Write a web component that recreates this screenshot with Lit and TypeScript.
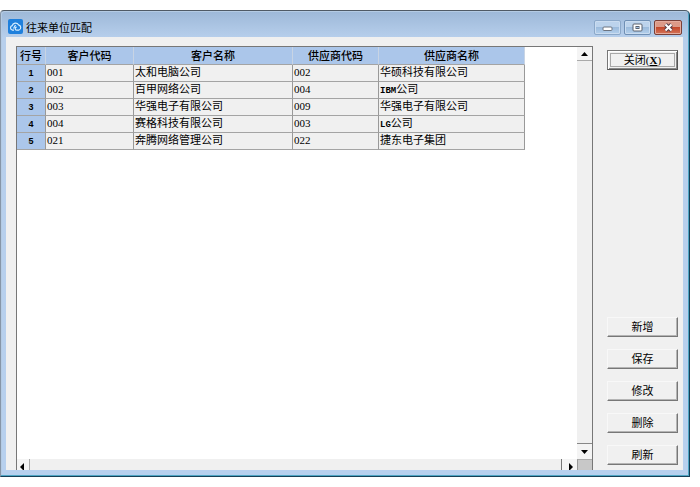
import { LitElement, html, css, svg } from "lit";
import { customElement, state } from "lit/decorators.js";

interface Match {
  code: string;
  customer: string;
  supplierCode: string;
  latin?: string;
  supplier: string;
}

const MATCHES: Match[] = [
  { code: "001", customer: "太和电脑公司", supplierCode: "002", supplier: "华硕科技有限公司" },
  { code: "002", customer: "百甲网络公司", supplierCode: "004", latin: "IBM", supplier: "公司" },
  { code: "003", customer: "华强电子有限公司", supplierCode: "009", supplier: "华强电子有限公司" },
  { code: "004", customer: "赛格科技有限公司", supplierCode: "003", latin: "LG", supplier: "公司" },
  { code: "021", customer: "奔腾网络管理公司", supplierCode: "022", supplier: "捷东电子集团" },
];

const arrow = (points: string) => html`
  <svg width="8" height="8" viewBox="0 0 8 8" aria-hidden="true">${svg`<polygon points=${points} fill="#000"/>`}</svg>
`;

@customElement("match-grid")
export class MatchGrid extends LitElement {
  static styles = css`
    :host {
      display: grid;
      grid-template-columns: minmax(0, 1fr) 15px;
      grid-template-rows: minmax(0, 1fr) 11px;
      background: #fff;
      border: 1px solid #777;
      border-bottom: 0;
    }
    .view { overflow: hidden; }
    table {
      border-collapse: separate;
      border-spacing: 0;
      table-layout: fixed;
      width: 508px;
    }
    .c-no { width: 29px; }
    .c-code { width: 88px; }
    .c-name { width: 159px; }
    .c-scode { width: 86px; }
    .c-sname { width: 146px; }
    th, td {
      box-sizing: border-box;
      height: 17px;
      padding: 0 0 0 1px;
      border-right: 1px solid #999;
      border-bottom: 1px solid #a4a4a4;
      font-size: 11px;
      line-height: 12px;
      white-space: nowrap;
      vertical-align: top;
    }
    td { background: #f0f0f0; text-align: left; }
    th {
      background: #abc6ea;
      text-align: center;
      font-weight: 500;
      padding: 0;
    }
    thead th { height: 18px; line-height: 16px; border-right-color: #c8d4e4; }
    tbody th { font: bold 9px/16px "Liberation Sans", sans-serif; }
    td.code { font-family: "Liberation Serif", serif; line-height: 14px; }
    .latin { font: bold 9px/9px "Liberation Mono", monospace; }
    button {
      display: flex;
      align-items: center;
      justify-content: center;
      flex: none;
      padding: 0;
      border: 0;
      background: #f4f4f4;
    }
    .vbar, .hbar {
      display: flex;
      justify-content: space-between;
      background: #f0f0f0;
    }
    .vbar { flex-direction: column; }
    .vbar button { height: 14px; }
    .vbar .first { border-bottom: 1px solid #aaa; }
    .vbar .last { height: 16px; border-top: 1px solid #888; }
    .hbar { overflow: hidden; }
    .hbar button { width: 13px; height: 15px; }
    .hbar .first { border-right: 1px solid #aaa; }
    .hbar .last { width: 16px; border-left: 1px solid #777; }
    .corner { background: #c8c8c8; border-left: 1px solid #999; border-top: 1px solid #aaa; }
  `;

  render() {
    return html`
      <div class="view">
        <table>
          <colgroup>
            <col class="c-no" /><col class="c-code" /><col class="c-name" /><col class="c-scode" /><col class="c-sname" />
          </colgroup>
          <thead>
            <tr>
              ${["行号", "客户代码", "客户名称", "供应商代码", "供应商名称"].map((t) => html`<th scope="col">${t}</th>`)}
            </tr>
          </thead>
          <tbody>
            ${MATCHES.map((m, i) => html`
              <tr>
                <th scope="row">${i + 1}</th>
                <td class="code">${m.code}</td>
                <td>${m.customer}</td>
                <td class="code">${m.supplierCode}</td>
                <td>${m.latin ? html`<span class="latin">${m.latin}</span>` : ""}${m.supplier}</td>
              </tr>
            `)}
          </tbody>
        </table>
      </div>
      <div class="vbar">
        <button class="first" aria-label="向上滚动">${arrow("0,6 3.5,2 7,6")}</button>
        <button class="last" aria-label="向下滚动">${arrow("0,2 3.5,6 7,2")}</button>
      </div>
      <div class="hbar">
        <button class="first" aria-label="向左滚动">${arrow("5,0 1,4 5,8")}</button>
        <button class="last" aria-label="向右滚动">${arrow("3,0 7,4 3,8")}</button>
      </div>
      <div class="corner"></div>
    `;
  }
}

@customElement("app-root")
export class AppRoot extends LitElement {
  @state() private actions = ["新增", "保存", "修改", "删除", "刷新"];

  static styles = css`
    :host {
      display: block;
      box-sizing: border-box;
      height: 100vh;
      padding: 10px 10px 10px 0;
      background: #fff;
      color: #000;
      font: 11px/14px "Noto Sans CJK SC", sans-serif;
    }
    .window {
      box-sizing: border-box;
      height: 100%;
      display: flex;
      flex-direction: column;
      padding: 0 6px 6px 5px;
      background: linear-gradient(#9db8d8, #b7cfec 27px, #b7d0ee);
      border: 1px solid #4f5a66;
      border-left-color: #8796a8;
      border-right-color: #173f58;
      border-bottom-color: #173f58;
      border-radius: 4px 5px 0 0;
      box-shadow: inset -1px -1px #4fa6c4, inset 1px 1px #b4cbe4;
    }
    .title {
      display: flex;
      align-items: center;
      height: 26px;
      flex: none;
      gap: 3px;
      padding: 0 1px 0 2px;
    }
    .title h1 {
      flex: 1;
      margin: 0;
      padding-top: 6px;
      font-size: 11px;
      line-height: 14px;
      font-weight: 400;
    }
    .logo { display: block; margin-top: 5px; }
    .title button {
      display: flex;
      align-items: center;
      justify-content: center;
      width: 27px;
      height: 15px;
      margin-top: 7px;
      padding: 0;
      border: 1px solid #8ba8c9;
      border-radius: 2px;
      background: linear-gradient(#bcd3ec 50%, #9cbbdc 50%, #b4d0ec);
      box-shadow: inset 0 0 0 1px #cadcf0;
    }
    .title .restore { border-color: #6f8fb4; }
    .title .exit {
      width: 28px;
      border-color: #7a4038;
      background: linear-gradient(#dc9a88 50%, #c4492c 50%, #d4745a);
      box-shadow: inset 0 0 0 1px #e4ac9e;
    }
    .client {
      flex: 1;
      min-height: 0;
      display: flex;
      padding-left: 10px;
      background: #f0f0f0;
    }
    match-grid { flex: 1; min-width: 0; margin-top: 9px; }
    .side {
      flex: none;
      box-sizing: border-box;
      width: 90px;
      display: flex;
      flex-direction: column;
      gap: 12px;
      padding: 13px 5px 5px 14px;
    }
    .side button {
      height: 20px;
      padding: 0 0 2px;
      border: 1px solid;
      border-color: #f8f8f8 #777 #777 #f8f8f8;
      background: #f0f0f0;
      box-shadow: inset -1px -1px #b4b4b4;
      color: #000;
      font: inherit;
    }
    .side .close {
      margin-bottom: auto;
      line-height: 12px;
      border-color: #777 #555 #555 #777;
      box-shadow: inset 1px 1px #fff, inset -1px -1px #888;
      outline: 1px solid #a8a8a8;
      outline-offset: -4px;
    }
    .key { font-family: "Liberation Serif", serif; }
    .key u { font-weight: 700; }
  `;

  render() {
    return html`
      <main class="window">
        <header class="title">
          <svg class="logo" width="15" height="15" viewBox="0 0 15 15" aria-hidden="true">
            <rect width="15" height="15" rx="2" fill="#1f80dc" />
            <path d="M6 11.200H4.500A2.300 2.300 0 0 1 4.200 6.700A3.400 3.400 0 0 1 10.500 5.800A2.800 2.800 0 0 1 10.800 11.200H8.700A1.500 1.500 0 0 1 8.700 8.200M5.500 9.500L7.500 6" fill="none" stroke="#d8eeff" stroke-width="1.200" />
          </svg>
          <h1>往来单位匹配</h1>
          <button aria-label="最小化">
            <svg width="11" height="9" viewBox="0 0 11 9"><rect x="1" y="4" width="9" height="3.500" rx="1" fill="#fff" stroke="#6d7480" /></svg>
          </button>
          <button class="restore" aria-label="最大化">
            <svg width="11" height="9" viewBox="0 0 11 9"><rect x="1" y="1" width="9" height="7" rx="1" fill="#fff" stroke="#59616e" /><rect x="4" y="3.500" width="3" height="2" fill="#9cbbdc" stroke="#59616e" /></svg>
          </button>
          <button class="exit" aria-label="关闭窗口">
            <svg width="11" height="9" viewBox="0 0 11 9"><path d="M2.500 1.500L8.500 7.500M8.500 1.500L2.500 7.500" stroke="#57404a" stroke-width="4" /><path d="M2.500 1.500L8.500 7.500M8.500 1.500L2.500 7.500" stroke="#fff" stroke-width="2" /></svg>
          </button>
        </header>
        <section class="client">
          <match-grid></match-grid>
          <nav class="side">
            <button class="close">关闭<span class="key">(<u>X</u>)</span></button>
            ${this.actions.map((a) => html`<button>${a}</button>`)}
          </nav>
        </section>
      </main>
    `;
  }
}
